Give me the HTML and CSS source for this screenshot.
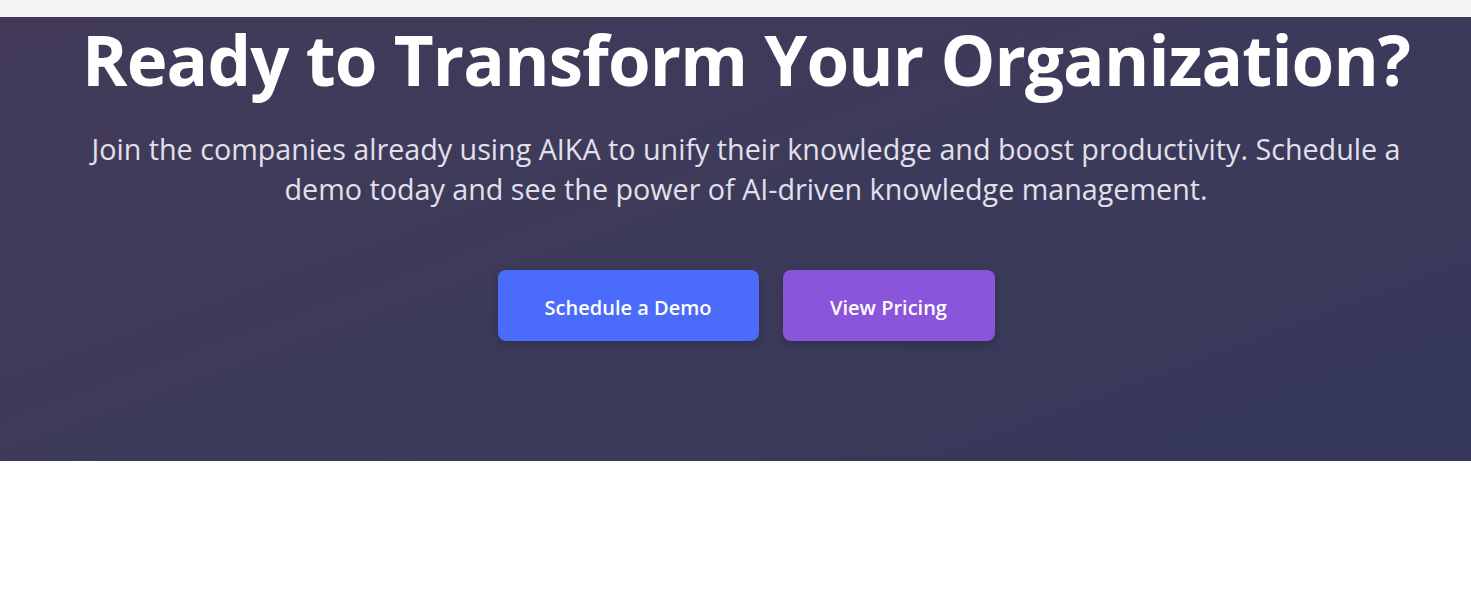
FILE: index.html
```html
<!DOCTYPE html>
<html lang="en">
<head>
<meta charset="utf-8">
<title>AIKA - Ready to Transform</title>
<link rel="stylesheet" href="styles.css">
</head>
<body>
<div class="prev"></div>
<section class="cta">
  <h1 class="cta-title">Ready to Transform Your Organization?</h1>
  <p class="cta-text">Join the companies already using AIKA to unify their knowledge and boost productivity. Schedule a demo today and see the power of AI-driven knowledge management.</p>
  <div class="cta-actions">
    <a class="btn btn-primary" href="#">Schedule a Demo</a>
    <a class="btn btn-secondary" href="#">View Pricing</a>
  </div>
</section>
<div class="after"></div>
</body>
</html>
```
FILE: styles.css
```css
* { box-sizing: border-box; }
html, body { margin: 0; padding: 0; background: #ffffff; }
body { font-family: "Open Sans", "Noto Sans", sans-serif; }
.prev { height: 17px; background: #f4f4f4; }
.cta {
  background: linear-gradient(160deg, #433a59 0%, #3c3a5a 50%, #36395a 100%);
  padding: 0 19px 120px 40px;
  text-align: center;
  color: #fff;
}
.cta-title {
  margin: 0;
  font-size: 69px;
  line-height: 85px;
  font-weight: 700;
  letter-spacing: -0.85px;
}
.cta-text {
  margin: 27px auto 0;
  max-width: 1340px;
  font-size: 28.7px;
  line-height: 40px;
  color: #e2e0ea;
}
.cta-actions {
  display: flex;
  justify-content: center;
  gap: 24px;
  margin-top: 61px;
}
.btn {
  display: flex;
  align-items: center;
  justify-content: center;
  height: 71px;
  padding-top: 3px;
  border-radius: 8px;
  color: #fff;
  text-decoration: none;
  font-size: 20px;
  font-weight: 600;
  white-space: nowrap;
  box-shadow: 0 4px 10px rgba(0,0,0,0.18);
}
.btn-primary { background: #4b6bfb; width: 261px; }
.btn-secondary { background: #8b55db; width: 212px; }
.after { height: 128px; background: #fff; }
```
